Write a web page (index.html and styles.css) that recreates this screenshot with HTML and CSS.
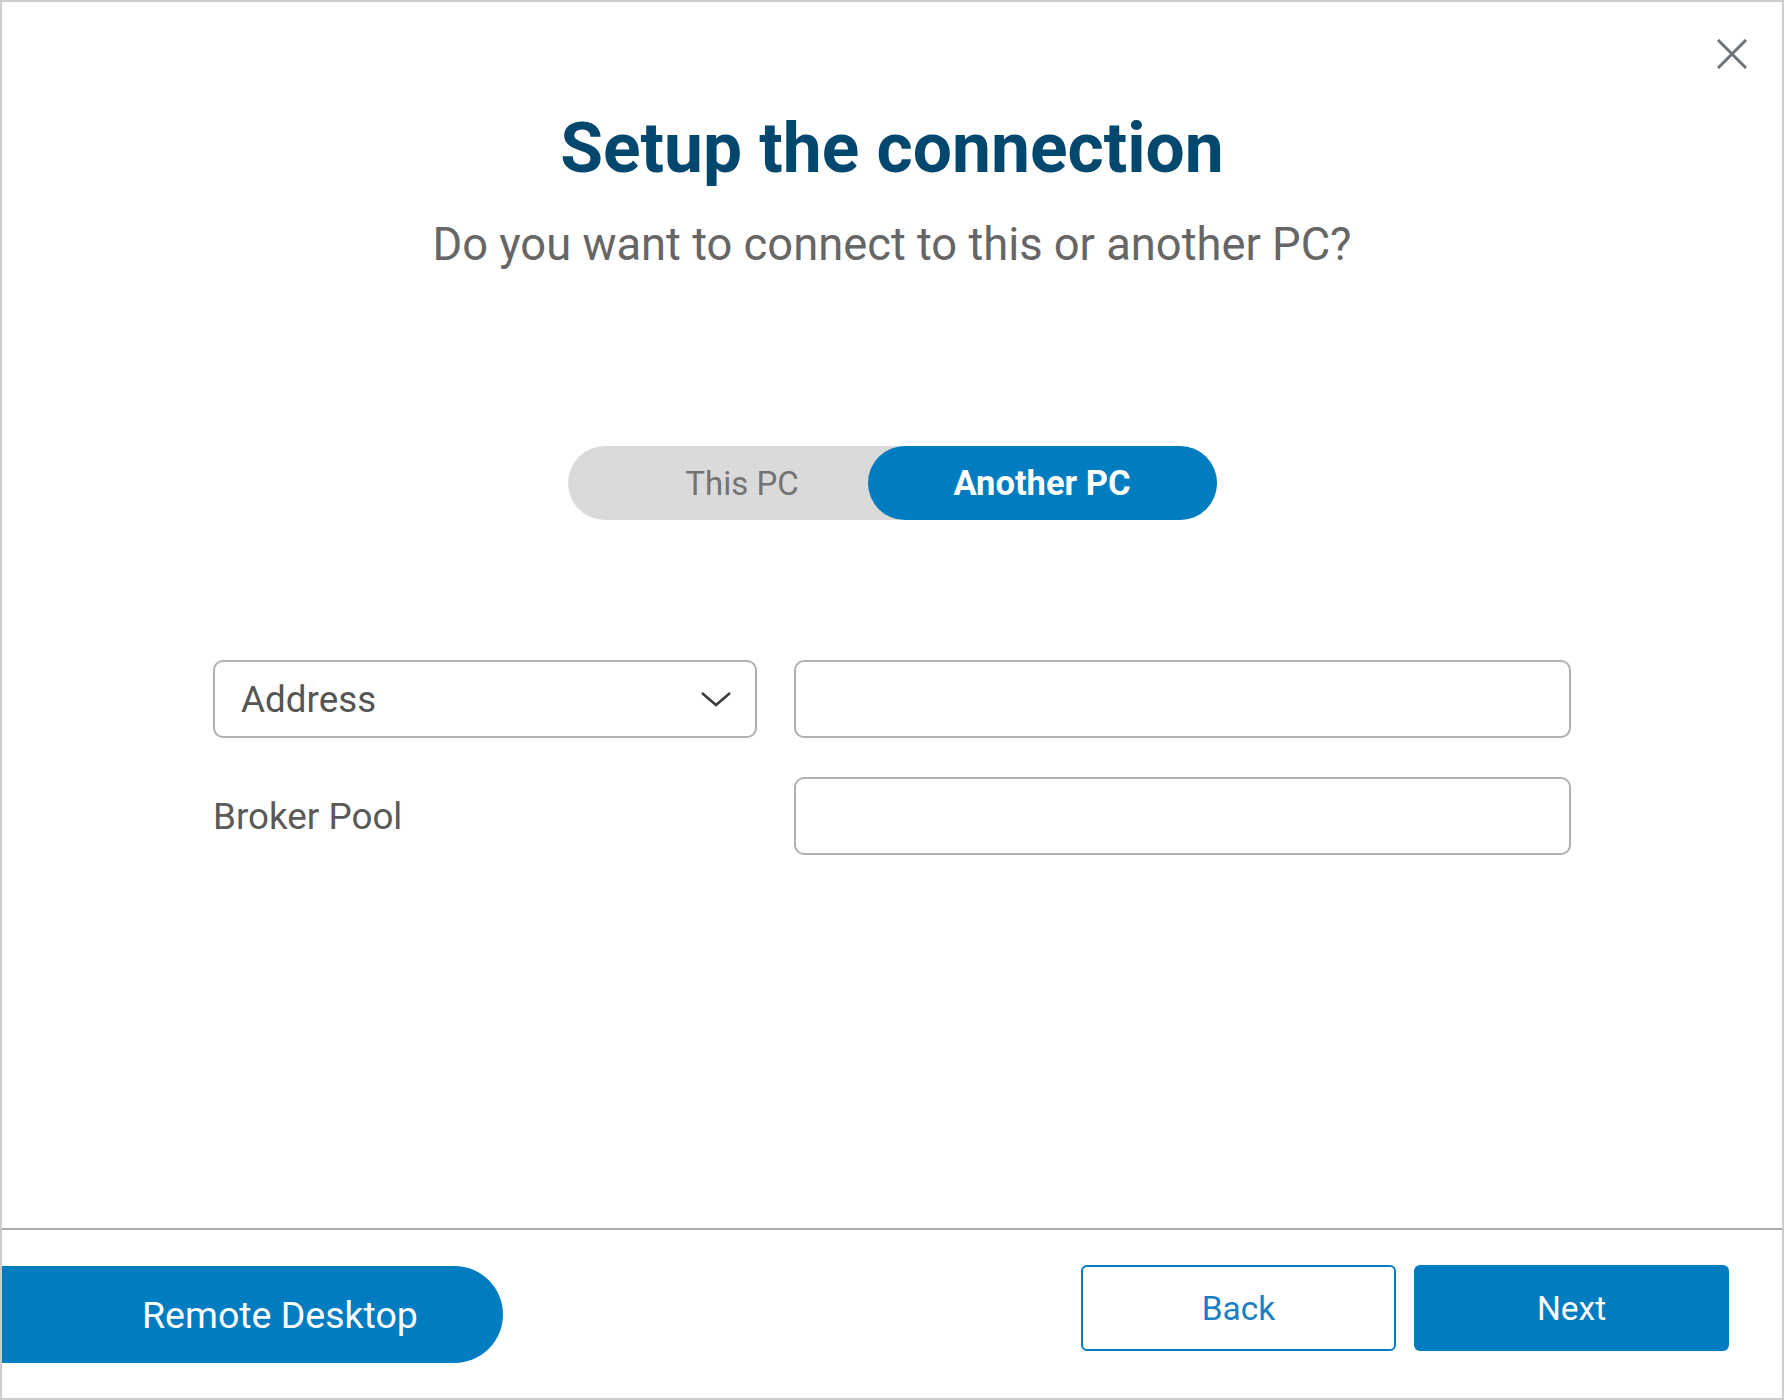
FILE: index.html
```html
<!DOCTYPE html>
<html lang="en">
<head>
<meta charset="utf-8">
<title>Setup the connection</title>
<link rel="stylesheet" href="styles.css">
</head>
<body>
<div class="window">
  <main class="main">
    <button class="close" aria-label="Close">
      <svg width="30" height="30" viewBox="0 0 30 30"><path d="M2 2 L28 28 M28 2 L2 28" stroke="#6c737d" stroke-width="3" stroke-linecap="square" fill="none"/></svg>
    </button>
    <h1 class="title">Setup the connection</h1>
    <p class="subtitle">Do you want to connect to this or another PC?</p>
    <div class="toggle">
      <button class="seg seg-off">This PC</button>
      <button class="seg seg-on">Another PC</button>
    </div>
    <div class="form">
      <div class="select">
        <span class="select-text">Address</span>
        <svg class="chev" width="34" height="18" viewBox="0 0 34 18"><path d="M3 3 L17 15 L31 3" stroke="#3d3d3d" stroke-width="2.6" fill="none"/></svg>
      </div>
      <div class="input"></div>
      <div class="label">Broker Pool</div>
      <div class="input"></div>
    </div>
  </main>
  <footer class="footer">
    <button class="rd">Remote Desktop</button>
    <div class="actions">
      <button class="btn btn-back">Back</button>
      <button class="btn btn-next">Next</button>
    </div>
  </footer>
</div>
</body>
</html>
```

FILE: styles.css
```css
* { box-sizing: border-box; }
html, body { margin: 0; padding: 0; background: #fff; }
body { font-family: Roboto, "Liberation Sans", sans-serif; }
button { font-family: inherit; cursor: pointer; }

.window {
  width: 1784px;
  height: 1400px;
  border: 2px solid #cdcdcd;
  display: flex;
  flex-direction: column;
  background: #fff;
}

.main {
  position: relative;
  flex: 1;
  display: flex;
  flex-direction: column;
  align-items: center;
  padding-top: 107px;
  border-bottom: 2px solid #acacac;
}

.close {
  position: absolute;
  top: 37px;
  right: 35px;
  width: 30px;
  height: 30px;
  padding: 0;
  border: 0;
  background: transparent;
  display: flex;
}

.title {
  margin: 0;
  font-size: 69.5px;
  line-height: 80px;
  font-weight: 700;
  color: #02476d;
}

.subtitle {
  margin: 30px 0 0;
  font-size: 45.3px;
  line-height: 52px;
  color: #666666;
}

.toggle {
  margin-top: 175px;
  width: 649px;
  height: 74px;
  border-radius: 37px;
  background: #dadada;
  display: flex;
}
.seg {
  width: 349px;
  height: 74px;
  border: 0;
  border-radius: 37px;
  font-size: 33px;
  padding: 0;
  background: transparent;
}
.seg-off { color: #737373; }
.seg-on {
  margin-left: -49px;
  background: #007cc1;
  color: #fff;
  font-weight: 700;
  font-size: 34.5px;
}

.form {
  margin-top: 140px;
  display: grid;
  grid-template-columns: 544px 777px;
  column-gap: 37px;
  row-gap: 39px;
  align-items: center;
}
.select {
  height: 78px;
  border: 2px solid #b0b0b0;
  border-radius: 10px;
  display: flex;
  align-items: center;
  justify-content: space-between;
  padding: 0 22px 0 26px;
}
.select-text { font-size: 36.8px; color: #555; }
.input {
  height: 78px;
  border: 2px solid #b0b0b0;
  border-radius: 10px;
}
.label { font-size: 36.8px; color: #5a5a5a; }

.footer {
  height: 168px;
  display: flex;
  justify-content: space-between;
  align-items: flex-start;
  padding: 35px 53px 0 0;
}
.rd {
  width: 501px;
  height: 97px;
  margin-top: 1px;
  border: 0;
  border-radius: 0 49px 49px 0;
  background: #007cc1;
  color: #fff;
  font-size: 37.5px;
  text-align: left;
  padding: 0 0 0 140px;
}
.actions { display: flex; gap: 18px; }
.btn {
  width: 315px;
  height: 86px;
  border-radius: 6px;
  font-size: 33.5px;
  padding: 0;
}
.btn-back { background: #fff; border: 2px solid #007cc1; color: #1a7fc4; }
.btn-next { background: #007cc1; border: 0; color: #fff; }
```
